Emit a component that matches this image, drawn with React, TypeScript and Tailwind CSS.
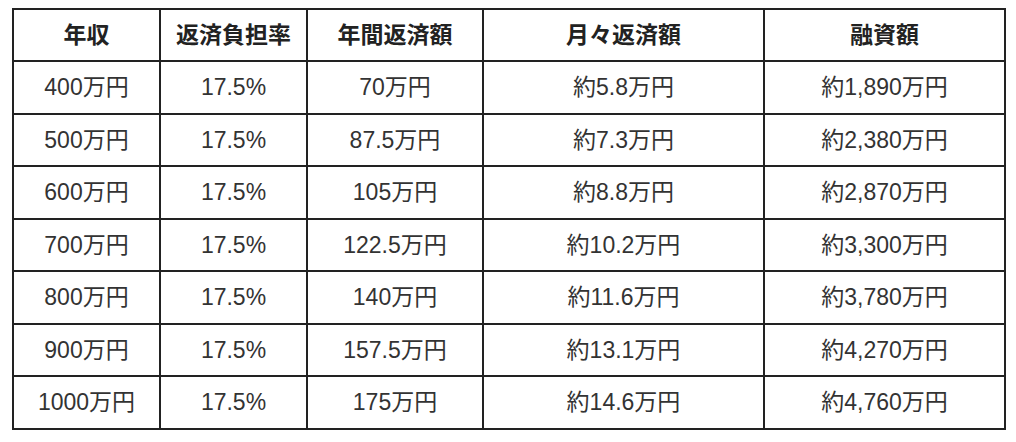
const headers = ["年収", "返済負担率", "年間返済額", "月々返済額", "融資額"];

const rows = [
  ["400万円", "17.5%", "70万円", "約5.8万円", "約1,890万円"],
  ["500万円", "17.5%", "87.5万円", "約7.3万円", "約2,380万円"],
  ["600万円", "17.5%", "105万円", "約8.8万円", "約2,870万円"],
  ["700万円", "17.5%", "122.5万円", "約10.2万円", "約3,300万円"],
  ["800万円", "17.5%", "140万円", "約11.6万円", "約3,780万円"],
  ["900万円", "17.5%", "157.5万円", "約13.1万円", "約4,270万円"],
  ["1000万円", "17.5%", "175万円", "約14.6万円", "約4,760万円"],
];

const widths = ["w-[147px]", "w-[147px]", "w-[176px]", "w-[281px]", "w-[241px]"];

export default function App() {
  return (
    <div
      className="w-[1016px] h-[442px] bg-white pt-[8px] pl-[12px]"
      style={{ fontFamily: '"Liberation Sans", "Noto Sans CJK JP", sans-serif' }}
    >
      <table className="table-fixed border-collapse border-2 border-[#222] text-[23px] text-[#333]">
        <thead>
          <tr className="h-[52px]">
            {headers.map((h, i) => (
              <th
                key={h}
                className={`${widths[i]} border-2 border-[#222] text-center align-middle font-bold text-[#222]`}
              >
                {h}
              </th>
            ))}
          </tr>
        </thead>
        <tbody>
          {rows.map((r) => (
            <tr key={r[0]} className="h-[52.5px]">
              {r.map((c, i) => (
                <td key={i} className="border-2 border-[#222] text-center align-middle">
                  {c}
                </td>
              ))}
            </tr>
          ))}
        </tbody>
      </table>
    </div>
  );
}
